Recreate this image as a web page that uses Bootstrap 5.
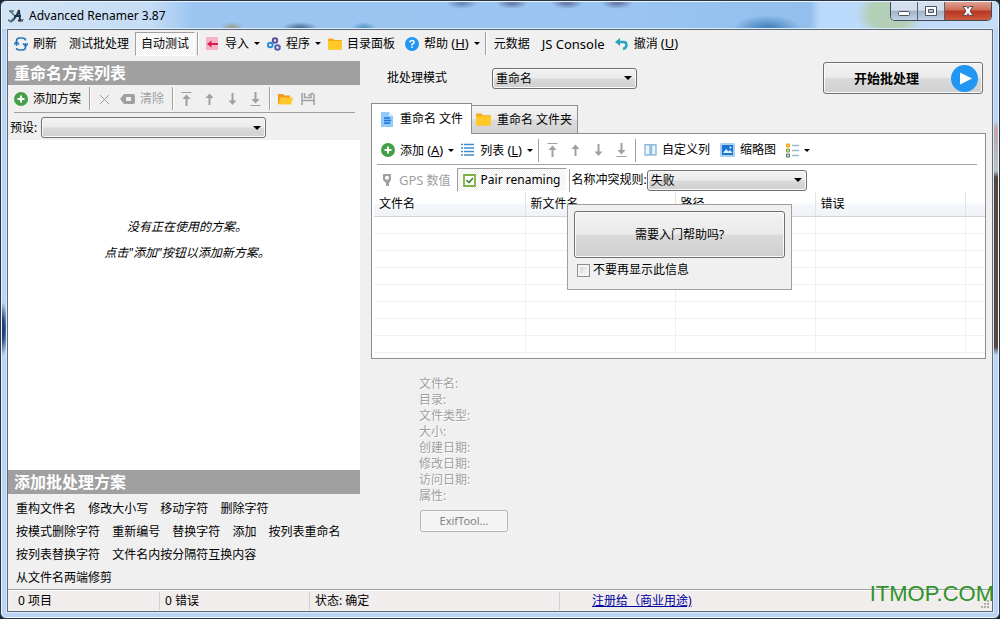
<!DOCTYPE html>
<html lang="zh-CN">
<head>
<meta charset="utf-8">
<meta name="viewport" content="width=device-width, initial-scale=1">
<title>Advanced Renamer 3.87</title>
<link href="https://cdn.jsdelivr.net/npm/bootstrap@5.3.0/dist/css/bootstrap.min.css" rel="stylesheet">
<style>
body{margin:0;background:#1c2733;color:#000;font-family:"Noto Sans","Noto Sans CJK SC",sans-serif;font-size:12px;line-height:16px}
.la{font-size:13px}
.win{min-height:100vh;border:1px solid #2b3440;border-radius:6px;padding:0 6px 6px 6px;overflow:hidden;
 background:linear-gradient(180deg,transparent 120px,#c3a3a3 128px,#b9c4bb 170px,#5b463b 176px,#5b463b 346px,transparent 354px) right/8px 100% no-repeat,
 radial-gradient(ellipse 8px 28px at 0 328px,#1f3e7a 40%,transparent 100%),#b9d5f3;
 box-shadow:inset 0 0 0 1px #e8f4ff}
.titlebar{height:27px;margin:1px -5px 0;border-radius:5px 5px 0 0;
 background:radial-gradient(ellipse 34px 14px at 765px 27px,#4a87c2 20%,transparent 100%),
 radial-gradient(ellipse 34px 26px at 888px 12px,#b4cfb8 60%,transparent 100%),
 radial-gradient(ellipse 12px 6px at 362px 26px,#5a9ac6 20%,transparent 100%),
 radial-gradient(ellipse 16px 6px at 460px 1px,#6c8fc0 20%,transparent 100%),
 radial-gradient(ellipse 16px 6px at 510px 1px,#6a7fae 20%,transparent 100%),
 radial-gradient(ellipse 16px 6px at 565px 1px,#6a7fae 20%,transparent 100%),
 radial-gradient(ellipse 16px 6px at 615px 1px,#6a7fae 20%,transparent 100%),
 radial-gradient(ellipse 12px 6px at 230px 26px,#9aa39a 20%,transparent 100%),
 radial-gradient(ellipse 18px 6px at 298px 26px,#55779c 20%,transparent 100%),
 linear-gradient(90deg,#d3e4f6 0,#c4dcf5 150px,#9cc6f1 190px,#9ac5f2 620px,#93bfec 808px,#b9d9fb 818px,#c6ddf6 100%)}
.caption{padding-left:6px}
.caption span{padding-left:5px}
.wbtns{height:19px;margin-right:6px;border:1px solid #414b57;border-top:0;border-radius:0 0 5px 5px;overflow:hidden}
.wbtn{border:0;border-right:1px solid #56616e;padding:0;width:27px;line-height:14px;background:linear-gradient(#d3dfec 45%,#a2b3c6 50%,#bed2e6)}
.wbtn.shut{width:46px;border-right:0;background:linear-gradient(#e0a093 0,#cf6c57 45%,#b7351f 50%,#cf5a3c)}
.client{background:#f0f0f0;border:1px solid #5b6978;box-shadow:0 0 0 1px #dcebfa}
.tbar{min-height:27px}
.tb{border:0;background:none;color:inherit;padding:0 6px;display:inline-flex;align-items:center;gap:5px;height:24px;white-space:nowrap}
.tb svg,.tab svg{flex:none}
.tb.dd{padding-right:1px}
.tb.dd::after{content:"";border:3px solid transparent;border-top-color:#000;border-bottom:0}
.tb.on{border:1px solid #a0a0a0;border-right-color:#fff;border-bottom-color:#fff;padding:0 5px;background:repeating-conic-gradient(#fff 0 25%,#f0f0f0 0 50%) 0 0/2px 2px}
.tb:disabled{color:#a0a0a0}
.vsep{width:1px;height:23px;background:#a0a0a0;box-shadow:1px 0 #fff;margin:0 2px;flex:none}
.side{width:352px}
.steptools{min-height:28px;margin:0 5px 0 6px}
.preset{padding:4px 0 2px 2px}
.bar{background:#a0a0a0;color:#fff;font-size:16px;font-weight:700;line-height:24px;padding-left:6px}
.bar h2{font:inherit;margin:0}
.sel{appearance:none;border:1px solid #707070;border-radius:3px;height:21px;padding:0 20px 0 3px;color:#000;font-size:12px;line-height:19px;
 background:url("data:image/svg+xml,%3Csvg xmlns='http://www.w3.org/2000/svg' width='8' height='4'%3E%3Cpath d='M0 0h8L4 4z'/%3E%3C/svg%3E") right 4px center no-repeat,linear-gradient(#f2f2f2,#ebebeb 48%,#dadada 52%,#cfcfcf);box-shadow:inset 0 0 0 1px #fafafa}
.sel-preset{width:225px}
.sel-mode{width:145px}
.sel-rule{width:160px}
.steps{background:#fff;min-height:200px;padding:74px 0 0 6px;line-height:26px;font-style:italic}
.ops{padding:3px 8px 0;line-height:23px}
.ops a{color:#000;text-decoration:none;margin-right:9px;white-space:nowrap}
.pbtn{border:1px solid #707070;border-radius:3px;color:#000;background:linear-gradient(#f2f2f2,#ebebeb 48%,#dadada 52%,#cfcfcf);box-shadow:inset 0 0 0 1px #fafafa}
.files{padding-left:11px}
.moderow{padding:1px 9px 9px 16px;gap:45px}
.start{width:160px;height:32px;font-size:13px;font-weight:700;padding:0 4px 0 30px}
.tab{border:1px solid #8c8e94;border-bottom:0;color:#000;display:flex;align-items:center;white-space:nowrap}
.tab.cur{background:#fff;height:31px;width:101px;padding:0 0 0 8px;margin-bottom:-1px;z-index:1;gap:6px}
.tab.alt{background:linear-gradient(#f3f3f3,#ebebeb 48%,#dcdcdc 52%,#d2d2d2);height:28px;width:106px;padding:0 0 0 4px;border-left:0;gap:6px}
.pane{background:#fff;border:1px solid #8c8e94;height:226px;margin-right:6px;padding-left:2px}
.filetools{padding:4px 0 2px;margin:0 8px 0 3px}
.ruletools{padding-top:3px}
.rule{border-bottom:1px solid #a0a0a0}
.grid{table-layout:fixed;width:100%;border-collapse:collapse}
.grid th{height:24px;font-weight:400;padding:0 5px;border-right:1px solid #e2e4e8;border-bottom:1px solid #d5d5d5;background:linear-gradient(#fff 45%,#f4f8fc 50%,#f0f2f5)}
.grid td{height:17px;padding:0;border-right:1px solid #f0f0f0;border-bottom:1px solid #f0f0f0}
.grid th:last-child,.grid td:last-child{border-right:0}
.tip{position:absolute;left:195px;top:70px;width:225px;height:86px;background:#f0f0f0;border:1px solid #a0a0a0;padding:6px;z-index:3}
.tip .pbtn{height:47px;width:100%}
.tip input{width:13px;height:13px;appearance:none;border:1px solid #8e8f8f;background:linear-gradient(135deg,#cfd3d6,#fbfbfb);box-shadow:inset 0 0 0 2px #f4f4f4;margin:0 3px}
.info{color:#a0a0a0;text-shadow:1px 1px #fff;padding:17px 0 0 48px}
.exif{width:88px;height:22px;border-color:#b4b4b4;background:#f4f4f4;color:#838383;font-size:11px;margin:6px 0 0 1px;text-shadow:none}
.status{border-top:1px solid #a0a0a0;padding:2px 2px 1px;box-shadow:inset 0 1px #fff}
.cellx{background:#f1edec;border-right:1px solid #d0d0d0;height:18px;line-height:18px;padding-left:5px;width:150px}
.cellx.wide{width:250px}
.reg{color:#00009f}
.stamp{position:absolute;right:5px;bottom:12px;font:22px/24px "Liberation Sans",sans-serif;color:#2f922a}
.grip{position:absolute;right:9px;bottom:8px}
</style>
<script src="https://cdn.jsdelivr.net/npm/bootstrap@5.3.0/dist/js/bootstrap.bundle.min.js"></script>
</head>
<body>
<svg class="d-none">
<symbol id="plus" viewBox="0 0 14 14"><circle cx="7" cy="7" r="7" fill="#43a047"/><path d="M7 3.500v7M3.500 7h7" stroke="#fff" stroke-width="2"/></symbol>
<symbol id="folder" viewBox="0 0 14 14"><path d="M0 2.500Q0 1.500 1 1.500H5L6.500 3H13Q14 3 14 4V11.500Q14 12.500 13 12.500H1Q0 12.500 0 11.500Z" fill="#f9a61a"/><path d="M0 4H14V11.500Q14 12.500 13 12.500H1Q0 12.500 0 11.500Z" fill="#ffc928"/></symbol>
<symbol id="up" viewBox="0 0 14 16"><path d="M7 14V5" stroke="#a0a0a0" stroke-width="2"/><path d="M3 7L7 2.500 11 7Z" fill="#a0a0a0"/></symbol>
<symbol id="down" viewBox="0 0 14 16"><path d="M7 2V11" stroke="#a0a0a0" stroke-width="2"/><path d="M3 9.500L7 14 11 9.500Z" fill="#a0a0a0"/></symbol>
<symbol id="top" viewBox="0 0 14 16"><path d="M2 1.500H12" stroke="#a0a0a0"/><path d="M7 15V6" stroke="#a0a0a0" stroke-width="2"/><path d="M3 8L7 3.500 11 8Z" fill="#a0a0a0"/></symbol>
<symbol id="bottom" viewBox="0 0 14 16"><path d="M2 14.500H12" stroke="#a0a0a0"/><path d="M7 1V10" stroke="#a0a0a0" stroke-width="2"/><path d="M3 8L7 12.500 11 8Z" fill="#a0a0a0"/></symbol>
</svg>
<div class="win d-flex flex-column position-relative">
 <header class="titlebar d-flex">
  <div class="caption d-flex align-items-center flex-grow-1">
   <svg width="16" height="16" viewBox="0 0 16 16" fill="none"><path d="M4 13Q8 10 11 2L12 12M6 8H13M10 12.500H15" stroke="#20344c" stroke-width="1.900"/><path d="M1 3H6M2 3L6 7M2 14L6 10M0 12L4 14" stroke="#4f7480" stroke-width="1.700"/><path d="M12 14L16 11" stroke="#b56a75"/></svg>
   <span>Advanced Renamer 3.87</span>
  </div>
  <div class="wbtns d-flex">
   <button class="wbtn" aria-label="最小化"><svg width="14" height="14" viewBox="0 0 14 14"><rect x="1.500" y="7.500" width="11" height="4" rx="1" fill="#fff" stroke="#4a5563"/></svg></button>
   <button class="wbtn" aria-label="最大化"><svg width="14" height="14" viewBox="0 0 14 14"><path d="M1.500 2.500h11v9h-11zM4.500 5.500h5v3h-5z" fill="#fff" fill-rule="evenodd" stroke="#4a5563"/></svg></button>
   <button class="wbtn shut" aria-label="关闭"><svg width="14" height="14" viewBox="0 0 14 14"><path d="M2 2.500h3.500L7 4.500 8.500 2.500H12L9 7l3 4.500H8.500L7 9.500 5.500 11.500H2L5 7Z" fill="#fff" stroke="#55474c"/></svg></button>
  </div>
 </header>
 <main class="client d-flex flex-column flex-grow-1">
  <div class="tbar d-flex align-items-center" role="toolbar">
   <button class="tb"><svg width="14" height="14" viewBox="0 0 14 14" fill="none" stroke="#2878bd" stroke-width="1.600"><path d="M2.500 9V4Q2.500 1 5.500 1H8.500Q11.500 1 11.500 3.500M11.500 6V10Q11.500 13 8.500 13H5.500Q2.500 13 2.500 11"/><path d="M0 7.500L2.500 5 5 7.500M9 6.500L11.500 9 14 6.500"/></svg>刷新</button>
   <button class="tb">测试批处理</button>
   <button class="tb on">自动测试</button>
   <span class="vsep"></span>
   <button class="tb dd"><svg width="14" height="14" viewBox="0 0 14 14"><path d="M0 0H12V13H0Z" fill="#f5b4c6"/><path d="M3 7H12" stroke="#d81b50" stroke-width="1.800"/><path d="M1 7L5.500 3.500V10.500Z" fill="#d81b50"/></svg>导入</button>
   <button class="tb dd"><svg width="14" height="14" viewBox="0 0 14 14" fill="none" stroke-width="2"><circle cx="8" cy="3.500" r="2.200" stroke="#5b4fa0"/><circle cx="3.300" cy="8" r="2.300" stroke="#2a8bd5"/><circle cx="10.500" cy="10.500" r="2.300" stroke="#555fae"/></svg>程序</button>
   <button class="tb"><svg width="14" height="14"><use href="#folder"/></svg>目录面板</button>
   <button class="tb dd ps-1"><svg width="14" height="14" viewBox="0 0 14 14"><circle cx="7" cy="7" r="7" fill="#2196f3"/><path d="M4.800 5.400Q5 3.500 7 3.500T9.200 5.300Q9.200 6.500 7 7.300V8.500M7 9.600V11.100" fill="none" stroke="#fff" stroke-width="1.500"/></svg><span>帮助 <span class="la">(<u>H</u>)</span></span></button>
   <span class="vsep ms-1"></span>
   <button class="tb">元数据</button>
   <button class="tb la">JS Console</button>
   <button class="tb ps-1"><svg width="14" height="14" viewBox="0 0 14 14"><path d="M0 5L5 1V9Z" fill="#2aa5bd"/><path d="M4 5H8.500Q11.500 5 11.500 8T8 12" fill="none" stroke="#2aa5bd" stroke-width="2.500"/></svg><span>撤消 <span class="la">(<u>U</u>)</span></span></button>
  </div>
  <div class="d-flex flex-grow-1 pt-1">
   <aside class="side flex-shrink-0 d-flex flex-column">
    <div class="bar"><h2>重命名方案列表</h2></div>
    <div class="steptools d-flex align-items-center rule">
     <button class="tb ps-0"><svg width="14" height="14"><use href="#plus"/></svg>添加方案</button>
     <span class="vsep"></span>
     <button class="tb" disabled aria-label="删除"><svg width="12" height="12" viewBox="0 0 12 12"><path d="M2 2L11 11M11 2L2 11" stroke="#a0a0a0"/></svg></button>
     <button class="tb ps-1" disabled><svg width="15" height="12" viewBox="0 0 15 12"><path d="M0 6L4 1H13Q15 1 15 3V9Q15 11 13 11H4Z" fill="#a0a0a0"/><path d="M6 4h5v4H6z" fill="#f0f0f0"/></svg>清除</button>
     <span class="vsep"></span>
     <button class="tb px-1" disabled aria-label="置顶"><svg width="15" height="16"><use href="#top"/></svg></button>
     <button class="tb px-1" disabled aria-label="上移"><svg width="15" height="16"><use href="#up"/></svg></button>
     <button class="tb px-1" disabled aria-label="下移"><svg width="15" height="16"><use href="#down"/></svg></button>
     <button class="tb px-1" disabled aria-label="置底"><svg width="15" height="16"><use href="#bottom"/></svg></button>
     <span class="vsep"></span>
     <button class="tb pe-1" aria-label="打开"><svg width="15" height="14" viewBox="0 0 15 14"><path d="M0 12V2H5L6.500 3.500H12V12Z" fill="#f59a1b"/><path d="M2.500 5.500H15L13 12.500H0.500Z" fill="#ffc72a"/></svg></button>
     <button class="tb ps-1" disabled aria-label="保存"><svg width="14" height="14" viewBox="0 0 14 14" fill="none" stroke="#a0a0a0" stroke-width="1.500"><path d="M1 1V13M13 13V3L11 1M3.500 1V5.500H10V1M1 8.500H13M8 2V4"/></svg></button>
    </div>
    <div class="preset d-flex align-items-center"><label for="ps">预设:</label><select id="ps" class="sel sel-preset ms-1"><option></option></select></div>
    <div class="steps text-center flex-grow-1">没有正在使用的方案。<br>点击"添加"按钮以添加新方案。</div>
    <div class="bar"><h2>添加批处理方案</h2></div>
    <nav class="ops"><a href="#">重构文件名</a> <a href="#">修改大小写</a> <a href="#">移动字符</a> <a href="#">删除字符</a><br><a href="#">按模式删除字符</a> <a href="#">重新编号</a> <a href="#">替换字符</a> <a href="#">添加</a> <a href="#">按列表重命名</a><br><a href="#">按列表替换字符</a> <a href="#">文件名内按分隔符互换内容</a><br><a href="#">从文件名两端修剪</a></nav>
   </aside>
   <section class="files flex-grow-1">
    <div class="moderow d-flex align-items-center">
     <label for="mode">批处理模式</label>
     <select id="mode" class="sel sel-mode"><option>重命名</option></select>
     <button class="pbtn start ms-auto d-flex align-items-center justify-content-between"><span>开始批处理</span><svg width="27" height="27" viewBox="0 0 27 27"><circle cx="13.500" cy="13.500" r="13.500" fill="#2196f3"/><path d="M9 7.500L21 13.500 9 19.500Z" fill="#fff"/></svg></button>
    </div>
    <div class="d-flex align-items-end" role="tablist">
     <button class="tab cur" role="tab" aria-selected="true"><svg width="14" height="15" viewBox="0 0 14 15"><path d="M1 0H9L13 4V15H1Z" fill="#90caf9"/><path d="M9 0V4H13Z" fill="#d9eefc"/><path d="M4 6H10M4 8.500H11M4 11H10" stroke="#1976d2" stroke-width="1.500"/></svg>重命名 文件</button>
     <button class="tab alt" role="tab"><svg width="15" height="15"><use href="#folder"/></svg>重命名 文件夹</button>
    </div>
    <div class="pane position-relative">
     <div class="filetools d-flex align-items-center rule">
      <button class="tb dd ps-1"><svg width="14" height="14"><use href="#plus"/></svg><span>添加 <span class="la">(<u>A</u>)</span></span></button>
      <button class="tb dd"><svg width="14" height="14" viewBox="0 0 14 14" stroke="#3b8fd0" stroke-width="1.500"><path d="M0 1.500H2M0 5H2M0 8.500H2M0 12H2M3 1.500H13M3 5H13M3 8.500H13M3 12H13"/></svg><span>列表 <span class="la">(<u>L</u>)</span></span></button>
      <span class="vsep ms-1"></span>
      <button class="tb px-1" disabled aria-label="置顶"><svg width="15" height="16"><use href="#top"/></svg></button>
      <button class="tb px-1" disabled aria-label="上移"><svg width="15" height="16"><use href="#up"/></svg></button>
      <button class="tb px-1" disabled aria-label="下移"><svg width="15" height="16"><use href="#down"/></svg></button>
      <button class="tb px-1" disabled aria-label="置底"><svg width="15" height="16"><use href="#bottom"/></svg></button>
      <span class="vsep"></span>
      <button class="tb pe-1"><svg width="13" height="12" viewBox="0 0 13 12"><path d="M1 .800H6V11H1ZM7.500 .800H12V11H7.500Z" fill="#e9f5fd" stroke="#8dbbd8" stroke-width="1.400"/></svg>自定义列</button>
      <button class="tb pe-1"><svg width="15" height="14" viewBox="0 0 15 14"><rect width="15" height="14" rx="1.500" fill="#a9d0ef"/><path d="M2 2H13V12H2Z" fill="#1976d2"/><path d="M3 10L6 6 8.500 8.500 10 7 12.500 10Z" fill="#e3f2fd"/><circle cx="10.500" cy="4.500" r="1" fill="#fff"/></svg>缩略图</button>
      <button class="tb dd" aria-label="视图"><svg width="13" height="15" viewBox="0 0 13 15"><path d="M.500 1h3v3h-3z" fill="#ffc928" stroke="#ef9f20"/><path d="M.500 6h3v3h-3z" fill="#c4dd9c" stroke="#8a9a4a"/><path d="M.500 11h3v3h-3z" fill="#bfe0d2" stroke="#56786a"/><path d="M6 2.500H13M6 7.500H13M6 12.500H13" stroke="#9db8cf" stroke-width="1.500"/></svg></button>
     </div>
     <div class="ruletools d-flex align-items-center">
      <button class="tb" disabled><svg width="14" height="14" viewBox="0 0 14 14"><path d="M3 1H11V7L9 10V13H6V10L3 7Z" fill="#a0a0a0"/><circle cx="7" cy="4.800" r="2" fill="#fff"/></svg><span><span class="la">GPS</span> 数值</span></button>
      <button class="tb on" aria-pressed="true"><svg width="13" height="13" viewBox="0 0 13 13"><path d="M1 1H12V12H1Z" fill="#fff" stroke="#7cb342" stroke-width="1.800"/><path d="M3.500 6L6 8.500 10 4" fill="none" stroke="#43802f" stroke-width="1.600"/></svg>Pair renaming</button>
      <span class="vsep"></span>
      <label for="conf">名称冲突规则:</label><select id="conf" class="sel sel-rule"><option>失败</option></select>
     </div>
     <table class="grid">
      <colgroup><col style="width:151px"><col style="width:150px"><col style="width:140px"><col style="width:150px"><col></colgroup>
      <thead><tr><th>文件名</th><th>新文件名</th><th>路径</th><th>错误</th><th></th></tr></thead>
      <tbody>
       <tr><td></td><td></td><td></td><td></td><td></td></tr><tr><td></td><td></td><td></td><td></td><td></td></tr>
       <tr><td></td><td></td><td></td><td></td><td></td></tr><tr><td></td><td></td><td></td><td></td><td></td></tr>
       <tr><td></td><td></td><td></td><td></td><td></td></tr><tr><td></td><td></td><td></td><td></td><td></td></tr>
       <tr><td></td><td></td><td></td><td></td><td></td></tr><tr><td></td><td></td><td></td><td></td><td></td></tr>
      </tbody>
     </table>
     <div class="tip">
      <button class="pbtn">需要入门帮助吗?</button>
      <div class="d-flex align-items-center pt-1"><input type="checkbox" id="nomore"><label for="nomore">不要再显示此信息</label></div>
     </div>
    </div>
    <div class="info"><div>文件名:</div><div>目录:</div><div>文件类型:</div><div>大小:</div><div>创建日期:</div><div>修改日期:</div><div>访问日期:</div><div>属性:</div>
     <button class="pbtn exif" disabled>ExifTool...</button></div>
   </section>
  </div>
  <footer class="status d-flex">
   <div class="cellx ps-2">0 项目</div><div class="cellx">0 错误</div><div class="cellx wide">状态: 确定</div>
   <div class="cellx flex-grow-1 border-0 ps-4"><a class="reg ms-2" href="#">注册给（商业用途)</a></div>
  </footer>
 </main>
 <svg class="grip" width="10" height="10" viewBox="0 0 10 10" fill="#b4b0ae"><path d="M7 0h2v2H7zM4 3h2v2H4zM7 3h2v2H7zM1 6h2v2H1zM4 6h2v2H4zM7 6h2v2H7z"/></svg>
 <div class="stamp">ITMOP.COM</div>
</div>
</body>
</html>
